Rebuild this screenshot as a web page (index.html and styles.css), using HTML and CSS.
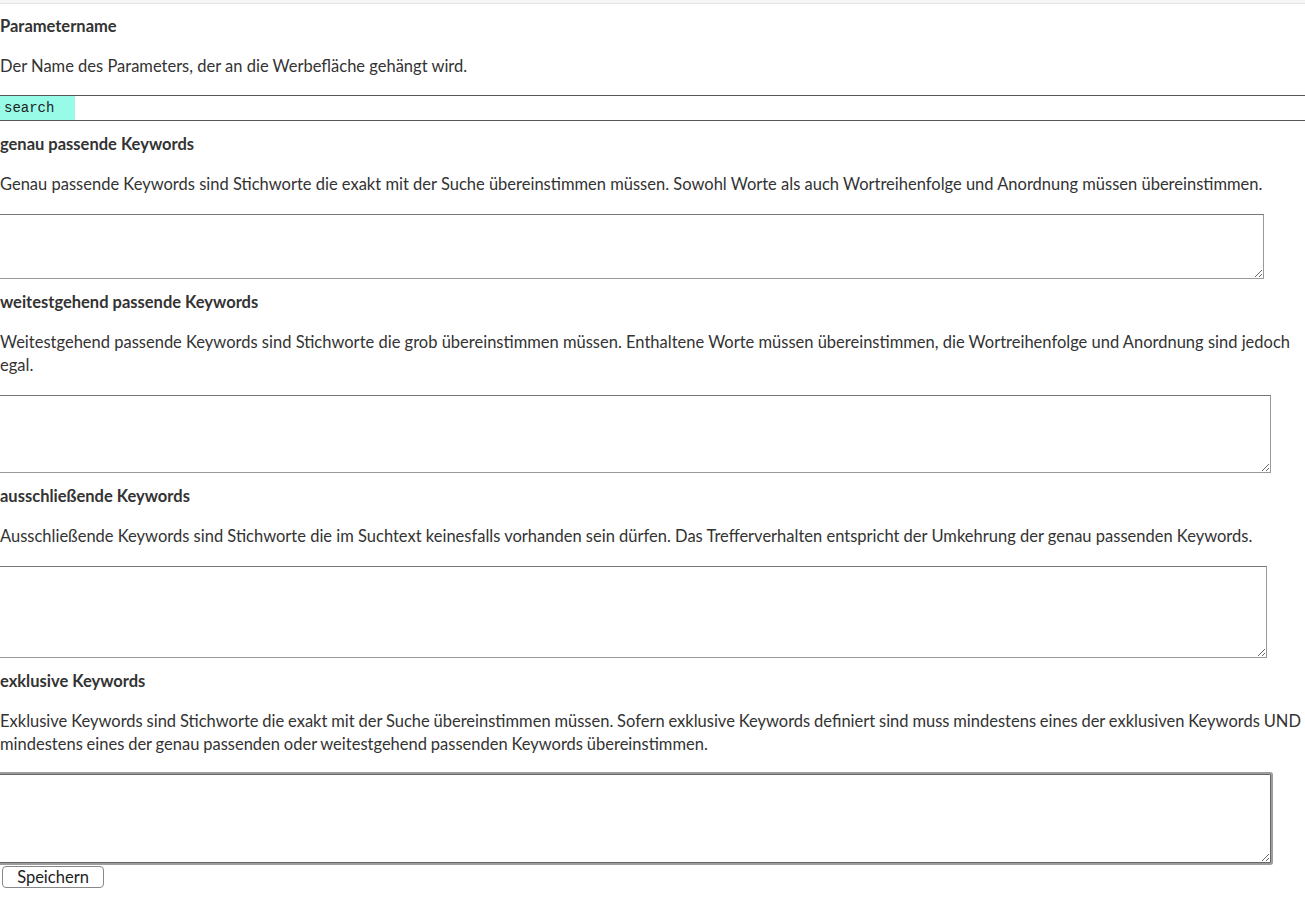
FILE: index.html
```html
<!DOCTYPE html>
<html lang="de">
<head>
  <meta charset="UTF-8">
  <meta name="viewport" content="width=device-width, initial-scale=1.0">
  <title>Keywords</title>
  <link rel="stylesheet" href="styles.css">
</head>
<body>
  <div class="topbar"></div>
  <form class="settings">
    <div class="field">
      <label for="param">Parametername</label>
      <p>Der Name des Parameters, der an die Werbefläche gehängt wird.</p>
      <input type="text" id="param" class="param" value="search">
    </div>
    <div class="field">
      <label for="exact">genau passende Keywords</label>
      <p>Genau passende Keywords sind Stichworte die exakt mit der Suche übereinstimmen müssen. Sowohl Worte als auch Wortreihenfolge und Anordnung müssen übereinstimmen.</p>
      <textarea id="exact" class="kw kw-exact"></textarea>
    </div>
    <div class="field">
      <label for="broad">weitestgehend passende Keywords</label>
      <p>Weitestgehend passende Keywords sind Stichworte die grob übereinstimmen müssen. Enthaltene Worte müssen übereinstimmen, die Wortreihenfolge und Anordnung sind jedoch egal.</p>
      <textarea id="broad" class="kw kw-broad"></textarea>
    </div>
    <div class="field">
      <label for="negative">ausschließende Keywords</label>
      <p>Ausschließende Keywords sind Stichworte die im Suchtext keinesfalls vorhanden sein dürfen. Das Trefferverhalten entspricht der Umkehrung der genau passenden Keywords.</p>
      <textarea id="negative" class="kw kw-negative"></textarea>
    </div>
    <div class="field last">
      <label for="exclusive">exklusive Keywords</label>
      <p class="tight">Exklusive Keywords sind Stichworte die exakt mit der Suche übereinstimmen müssen. Sofern exklusive Keywords definiert sind muss mindestens eines der exklusiven Keywords UND mindestens eines der genau passenden oder weitestgehend passenden Keywords übereinstimmen.</p>
      <textarea id="exclusive" class="kw kw-exclusive active"></textarea>
    </div>
    <button type="button" class="save">Speichern</button>
  </form>
</body>
</html>
```

FILE: styles.css
```css
* {
  box-sizing: border-box;
}
body {
  margin: 0;
  font-family: Lato, "Open Sans", sans-serif;
  font-size: 16.5px;
  line-height: 23px;
  color: #333;
  background: #fff;
  overflow: hidden;
}
.topbar {
  height: 4px;
  background: #f6f6f6;
  border-bottom: 1px solid #e4e4e4;
}
.settings {
  padding-top: 11px;
}
.field {
  margin-bottom: 12px;
}
.field label {
  display: block;
  font-weight: bold;
}
.field p {
  margin: 17px 0 18px;
}
/* long help text, keeps "UND" on the first line */
.field p.tight {
  word-spacing: -0.4px;
}
.param {
  display: block;
  width: 1320px;
  height: 26px;
  margin-top: -1px;
  margin-left: -2px;
  padding: 0 0 0 6px;
  border: 0;
  border-top: 1px solid #555;
  border-bottom: 1px solid #555;
  font-family: "Liberation Mono", monospace;
  font-size: 14px;
  color: #222;
  background: linear-gradient(to right, #98fbe7 77px, #fff 77px);
}
.kw {
  display: block;
  margin-top: 2px;
  margin-left: -2px;
  border: 1px solid #999;
  border-top-color: #777;
  border-radius: 0;
  background: #fff;
  resize: both;
}
.kw-exact {
  width: 1266px;
  height: 65px;
}
.kw-broad {
  width: 1273px;
  height: 78px;
}
.kw-negative {
  width: 1269px;
  height: 92px;
}
.kw-exclusive {
  width: 1273px;
  height: 89px;
  margin-top: 3px;
}
.kw.active {
  border: 1px solid #666;
  border-radius: 1px;
  box-shadow: 0 0 0 2px #9d9d9d;
  outline: none;
}
.field.last {
  margin-bottom: 3px;
}
.save {
  display: block;
  width: 102px;
  height: 22px;
  margin-left: 2px;
  padding: 0;
  font-family: inherit;
  font-size: 16.5px;
  line-height: 20px;
  color: #222;
  background: #fff;
  border: 1px solid #888;
  border-radius: 4px;
}
```
